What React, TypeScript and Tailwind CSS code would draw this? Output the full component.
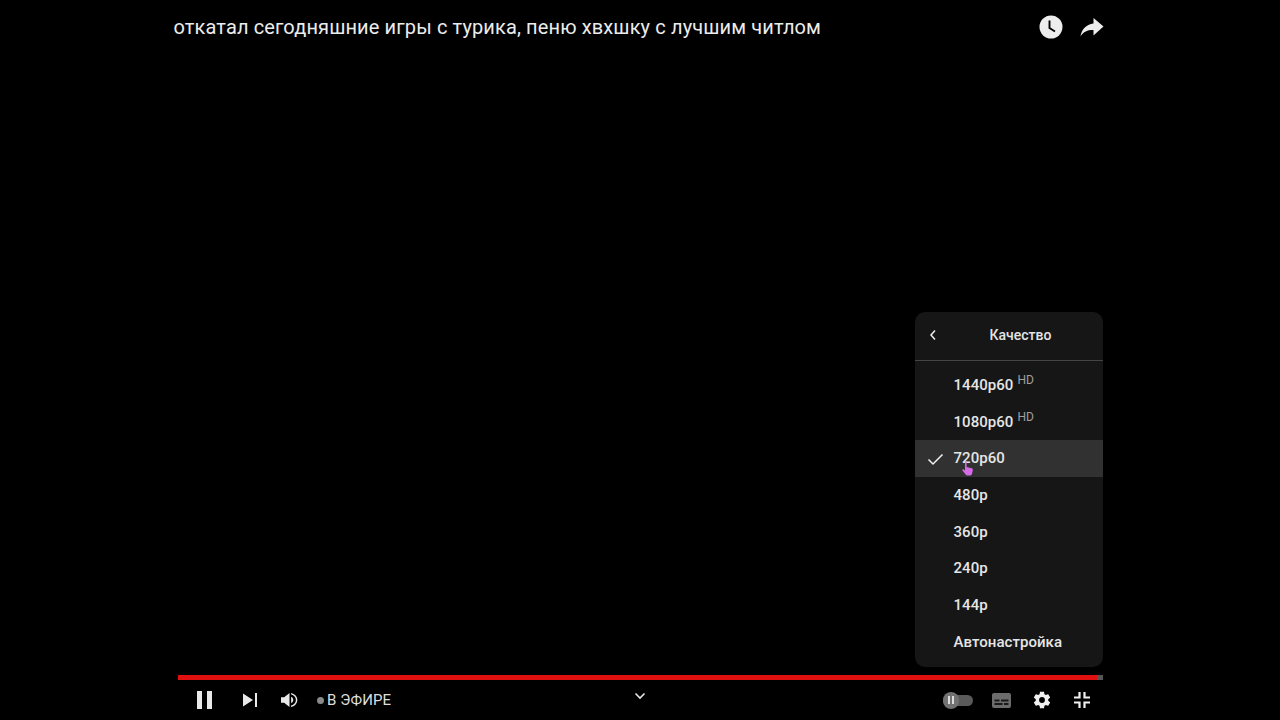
import React from "react";

const F = { fontFamily: '"Roboto", "Liberation Sans", sans-serif' };

function Row({ label, hd, active }: { label: string; hd?: boolean; active?: boolean }) {
  return (
    <div className={"relative flex h-[36.700px] shrink-0 items-center pl-[38.500px] " + (active ? "bg-[#303130]" : "")}>
      {active && (
        <svg width="18" height="18" viewBox="0 0 18 18" fill="none" stroke="#f1f1f1" strokeWidth="1.500" className="absolute left-[12px] top-[10px]">
          <path d="M1.500 9.500 L6 14 L15.500 4.500" />
        </svg>
      )}
      <div className="relative flex items-start">
        <span className="text-[15px] font-medium leading-[18px] tracking-[0.05px] text-[#e6e6e6]">{label}</span>
        {hd && <span className="ml-[4px] mt-[-3px] text-[12px] leading-[14px] text-[#a0a0a0]">HD</span>}
      </div>
      {active && (
        <svg width="14" height="16" viewBox="0 0 14 16" className="absolute left-[46px] top-[21px]">
          <path d="M4 1.500c0-.9 1.600-.9 1.600 0V6l5 1.200c1 .3 1.400 1 1.200 2l-.8 3.600c-.2 1-1 1.700-2 1.700H6.500c-.8 0-1.400-.3-1.900-1L1.500 9.600c-.6-.9.600-1.800 1.400-1L4 9.600z" fill="#d66be8" />
        </svg>
      )}
    </div>
  );
}

export default function App() {
  const rows: { label: string; hd?: boolean; active?: boolean }[] = [
    { label: "1440p60", hd: true },
    { label: "1080p60", hd: true },
    { label: "720p60", active: true },
    { label: "480p" },
    { label: "360p" },
    { label: "240p" },
    { label: "144p" },
    { label: "Автонастройка" },
  ];
  return (
    <div className="flex h-[720px] w-[1280px] flex-col overflow-hidden bg-black pl-[173px] pr-[177px]" style={F}>
      <header className="flex h-[54px] shrink-0 items-center justify-between">
        <h1 className="pl-[0.500px] text-[20px] font-normal leading-[26px] tracking-[0.125px] text-[#ececec]">
          откатал сегодняшние игры с турика, пеню хвхшку с лучшим читлом
        </h1>
        <div className="flex items-center gap-[17px]">
          <svg width="24" height="24" viewBox="0 0 24 24">
            <circle cx="12" cy="12" r="11.500" fill="#ededed" />
            <path d="M10.500 5.500V13l5.500 3.500" fill="none" stroke="#000" strokeWidth="1.900" />
          </svg>
          <svg width="24" height="24" viewBox="0 0 24 24" className="mr-[-1px]">
            <path d="M13.500 8.500V3L23.500 11.500 13.500 20.500V15C8 14.800 3.500 16.500 .5 21.500 1.500 14.500 6 9.500 13.500 8.500z" fill="#ededed" />
          </svg>
        </div>
      </header>

      <main className="flex min-h-0 flex-1 items-end justify-end">
        <div className="flex h-[355px] w-[188px] flex-col rounded-[10px] bg-[#161616] text-[#e6e6e6]">
          <div className="flex h-[49px] shrink-0 items-center border-b border-[#454545] pb-[2px] pl-[13px]">
            <svg width="10" height="12" viewBox="0 0 10 12" fill="none" stroke="#eeeeee" strokeWidth="1.500">
              <path d="M7 1.500 L3 6 L7 10.500" />
            </svg>
            <span className="ml-[51.500px] text-[14px] font-medium leading-[18px] text-[#e4e4e4]">Качество</span>
          </div>
          <div className="flex flex-col pt-[5.500px]">
            {rows.map((r) => (
              <Row key={r.label} {...r} />
            ))}
          </div>
        </div>
      </main>

      <div className="ml-[5px] mt-[8px] flex h-[5px] shrink-0 bg-[#e01010]">
        <div className="flex-1" />
        <div className="h-full w-[6px] bg-[#555555]" />
      </div>

      <footer className="relative flex h-[40px] shrink-0 items-center pl-[24px]">
        <svg width="15" height="18" viewBox="0 0 15 18" fill="#e9e9e9">
          <rect x="0" y="0" width="5" height="18" />
          <rect x="10" y="0" width="5" height="18" />
        </svg>
        <svg width="14" height="14" viewBox="0 0 14 14" fill="#e9e9e9" className="ml-[31px]">
          <path d="M0 0.500 L10 7 L0 13.500z" />
          <rect x="12" y="0" width="2" height="14" />
        </svg>
        <svg width="17" height="16" viewBox="0 0 16 15" className="ml-[24px]">
          <path d="M0 5h3L8 .8v13.400L3 10H0z" fill="#e9e9e9" />
          <path d="M9.500 4.500c1.400.7 2 1.700 2 3s-.6 2.300-2 3z" fill="#e9e9e9" />
          <path d="M9.500 1.500c3.200 1 5.200 3 5.200 6s-2 5-5.200 6" fill="none" stroke="#e9e9e9" strokeWidth="1.400" />
        </svg>
        <span className="ml-[19px] h-[7px] w-[7px] rounded-full bg-[#8a8a8a]" />
        <span className="ml-[3px] text-[15px] tracking-[0.1px] leading-[20px] text-[#dedede]">В ЭФИРЕ</span>

        <svg width="12" height="8" viewBox="0 0 12 8" fill="none" stroke="#e6e6e6" strokeWidth="1.600" className="absolute left-[461px] top-[12px]">
          <path d="M1.500 1.500 L6 6 L10.500 1.500" />
        </svg>

        <div className="ml-auto flex items-center">
          <div className="relative flex h-[11px] w-[30px] items-center rounded-full bg-[#5a5a5a]">
            <div className="absolute left-0 top-[-3px] flex h-[17px] w-[16px] items-center justify-center gap-[2px] rounded-full bg-[#727272]">
              <span className="h-[8px] w-[2px] bg-[#dddddd]" />
              <span className="h-[8px] w-[2px] bg-[#dddddd]" />
            </div>
          </div>
          <svg width="19" height="15" viewBox="0 0 19 15" className="ml-[19px]">
            <rect x="0" y="0" width="19" height="15" rx="2" fill="#6c6c6c" />
            <path d="M2.500 6.500h5v2h-5zM9 6.500h7.500v2H9zM2.500 10h8v2h-8zM12 10h4.500v2H12z" fill="#1a1a1a" />
          </svg>
          <svg width="20" height="20" viewBox="0 0 24 24" className="ml-[21px]" fill="#f0f0f0">
            <path d="M19.430 12.980c.04-.32.070-.64.070-.98s-.03-.66-.07-.98l2.110-1.650c.19-.15.240-.42.120-.64l-2-3.460c-.12-.22-.39-.30-.61-.22l-2.490 1c-.52-.40-1.080-.73-1.690-.98l-.38-2.650A.49.490 0 0 0 14 2h-4c-.25 0-.46.180-.49.420l-.38 2.650c-.61.250-1.170.59-1.690.98l-2.490-1a.5.500 0 0 0-.61.220l-2 3.460c-.13.220-.07.490.12.640l2.110 1.650c-.04.320-.07.650-.07.980s.03.660.07.980l-2.110 1.650c-.19.150-.24.420-.12.640l2 3.460c.12.220.39.300.61.220l2.490-1c.52.400 1.080.730 1.690.980l.38 2.650c.03.240.24.420.49.420h4c.25 0 .46-.18.490-.42l.38-2.650c.61-.25 1.170-.59 1.690-.98l2.490 1c.23.090.49 0 .61-.22l2-3.460c.12-.22.070-.49-.12-.64zM12 15.500a3.500 3.500 0 1 1 0-7 3.500 3.500 0 0 1 0 7z" />
          </svg>
          <svg width="18" height="18" viewBox="0 0 18 18" fill="none" stroke="#f0f0f0" strokeWidth="2.200" className="ml-[21px] mr-[12px]">
            <path d="M6.500 1v5.500H1M11.500 1v5.500H17M6.500 17v-5.500H1M11.500 17v-5.500H17" />
          </svg>
        </div>
      </footer>
    </div>
  );
}
